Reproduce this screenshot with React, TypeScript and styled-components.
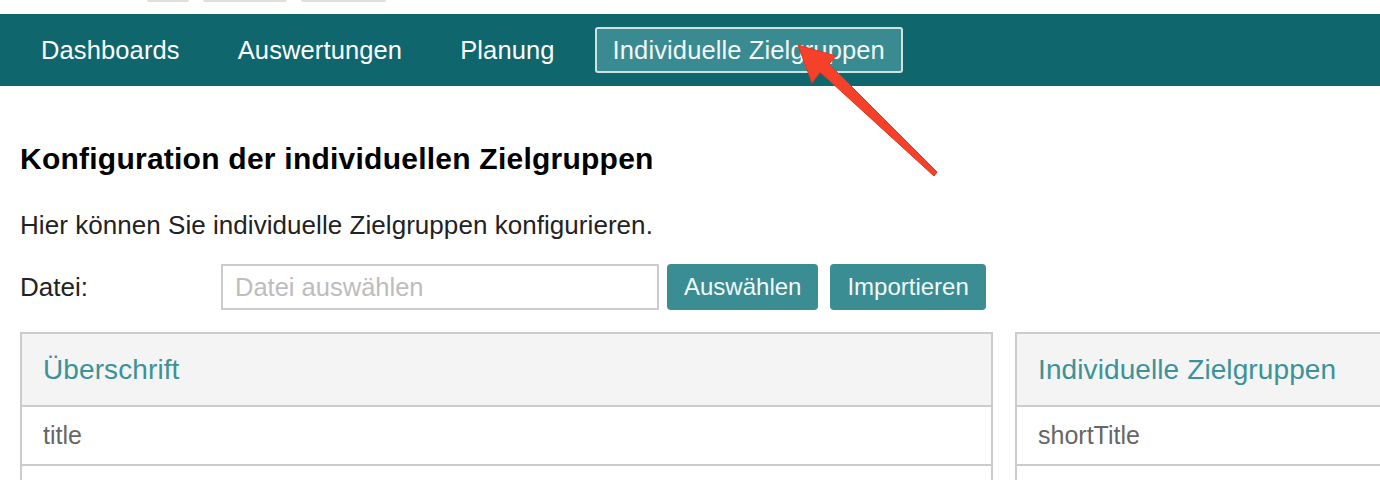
import React from "react";
import styled, { createGlobalStyle } from "styled-components";

const GlobalStyle = createGlobalStyle`
  html, body {
    margin: 0;
    padding: 0;
    overflow: hidden;
    background: #ffffff;
  }
  body {
    font-family: "Liberation Sans", Arial, Helvetica, sans-serif;
    width: 1380px;
    height: 480px;
  }
  * { box-sizing: border-box; }
`;

const Page = styled.div`
  position: relative;
  width: 1380px;
  height: 480px;
  overflow: hidden;
`;

const TopStrip = styled.div`
  height: 14px;
  display: flex;
  align-items: flex-start;
  gap: 14px;
  padding-left: 147px;
`;

const StripButton = styled.div<{ $w: number }>`
  width: ${(p) => p.$w}px;
  height: 2px;
  background: #e2dede;
  border-radius: 0 0 3px 3px;
`;

const NavBar = styled.nav`
  height: 72px;
  background: #10666d;
  display: flex;
  align-items: center;
  gap: 22px;
  padding-left: 23px;
`;

const NavItem = styled.a<{ $active?: boolean }>`
  height: 46px;
  display: flex;
  align-items: center;
  padding: 0 16px;
  font-size: 25.5px;
  letter-spacing: 0.12px;
  color: ${(p) => (p.$active ? "#f2f7f7" : "#ffffff")};
  background: ${(p) => (p.$active ? "#3a8b91" : "transparent")};
  border: 2px solid ${(p) => (p.$active ? "#cfe2e2" : "transparent")};
  border-radius: 3px;
  text-decoration: none;
  white-space: nowrap;
`;

const Content = styled.main`
  padding: 0 0 0 20px;
`;

const Heading = styled.h1`
  margin: 55px 0 0 0;
  font-size: 30px;
  line-height: 36px;
  letter-spacing: 0.24px;
  font-weight: bold;
  color: #000000;
`;

const Intro = styled.p`
  margin: 33px 0 0 0;
  font-size: 26px;
  line-height: 30px;
  letter-spacing: 0.05px;
  color: #222222;
`;

const FormRow = styled.div`
  margin-top: 24px;
  height: 46px;
  display: flex;
  align-items: stretch;
`;

const Label = styled.label`
  width: 201px;
  display: flex;
  align-items: center;
  font-size: 26px;
  color: #222222;
`;

const FileInput = styled.input`
  width: 438px;
  height: 46px;
  border: 2px solid #cccccc;
  border-radius: 0;
  padding: 0 12px;
  font-family: "Liberation Sans", Arial, sans-serif;
  font-size: 25.5px;
  color: #333;
  outline: none;
  &::placeholder {
    color: #bdbdbd;
  }
`;

const ActionButton = styled.button<{ $gap: number }>`
  margin-left: ${(p) => p.$gap}px;
  height: 46px;
  padding: 0 17px;
  border: none;
  border-radius: 4px;
  background: #3a8d93;
  color: #f3f9f9;
  font-family: "Liberation Sans", Arial, sans-serif;
  font-size: 24px;
  cursor: pointer;
`;

const Tables = styled.div`
  margin-top: 22px;
  display: flex;
  gap: 22px;
  align-items: flex-start;
`;

const Panel = styled.div<{ $w: number }>`
  flex: 0 0 ${(p) => p.$w}px;
  border: 2px solid #cccccc;
  border-bottom: none;
`;

const HeaderCell = styled.div`
  height: 73px;
  background: #f4f4f4;
  border-bottom: 2px solid #cccccc;
  display: flex;
  align-items: center;
  padding-left: 21px;
  font-size: 28px;
  letter-spacing: 0.1px;
  color: #3d9297;
  white-space: nowrap;
`;

const Cell = styled.div`
  height: 59px;
  border-bottom: 2px solid #cccccc;
  display: flex;
  align-items: center;
  padding-left: 21px;
  font-size: 25px;
  color: #666666;
  white-space: nowrap;
`;

const Overlay = styled.svg`
  position: absolute;
  left: 0;
  top: 0;
  pointer-events: none;
`;

const Arrow = () => (
  <Overlay width={1380} height={480} viewBox="0 0 1380 480">
    <polygon
      points="798,45 836,56 829,64 937,172 934,176 820,72 812,83"
      fill="#f5412a"
      stroke="#e6361f"
      strokeWidth={1}
      strokeLinejoin="round"
    />
  </Overlay>
);

export default function App() {
  return (
    <Page>
      <GlobalStyle />
      <TopStrip>
        <StripButton $w={42} />
        <StripButton $w={84} />
        <StripButton $w={85} />
      </TopStrip>
      <NavBar>
        <NavItem>Dashboards</NavItem>
        <NavItem>Auswertungen</NavItem>
        <NavItem>Planung</NavItem>
        <NavItem $active>Individuelle Zielgruppen</NavItem>
      </NavBar>
      <Content>
        <Heading>Konfiguration der individuellen Zielgruppen</Heading>
        <Intro>Hier können Sie individuelle Zielgruppen konfigurieren.</Intro>
        <FormRow>
          <Label>Datei:</Label>
          <FileInput placeholder="Datei auswählen" />
          <ActionButton $gap={8}>Auswählen</ActionButton>
          <ActionButton $gap={12}>Importieren</ActionButton>
        </FormRow>
        <Tables>
          <Panel $w={973}>
            <HeaderCell>Überschrift</HeaderCell>
            <Cell>title</Cell>
            <Cell />
          </Panel>
          <Panel $w={600}>
            <HeaderCell>Individuelle Zielgruppen</HeaderCell>
            <Cell>shortTitle</Cell>
            <Cell />
          </Panel>
        </Tables>
      </Content>
      <Arrow />
    </Page>
  );
}
